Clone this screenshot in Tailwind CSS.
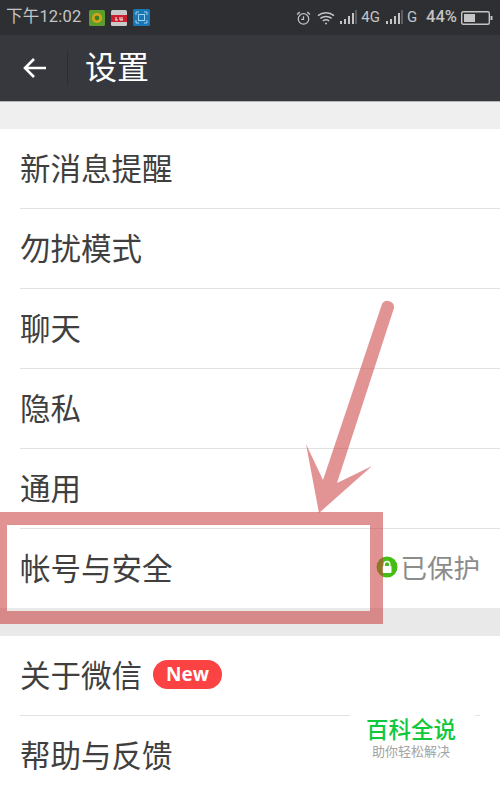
<!DOCTYPE html>
<html lang="zh-CN">
<head>
<meta charset="UTF-8">
<title>设置</title>
<script src="https://cdn.jsdelivr.net/npm/@tailwindcss/browser@4"></script>
</head>
<body class="m-0 bg-white font-['Noto_Sans_CJK_SC','Noto_Sans',sans-serif]">
<div class="relative w-[500px] h-[790px] overflow-hidden bg-white">

  <!-- status bar -->
  <div class="h-[35px] bg-[#2e2f33] flex items-center pl-[6px] pr-[7px] text-[#c4c4c4]">
    <span class="text-[16.5px] leading-none font-['Roboto','Noto_Sans_CJK_SC',sans-serif] tracking-[0.2px]">下午12:02</span>
    <svg class="ml-[7px]" width="16" height="16" viewBox="0 0 16 16"><rect width="16" height="16" rx="1.5" fill="#5c9e2e"/><circle cx="8" cy="8" r="5" fill="#d8a418"/><circle cx="8" cy="8" r="2.4" fill="#3f7d22"/></svg>
    <svg class="ml-[6px]" width="16" height="16" viewBox="0 0 16 16"><rect width="16" height="16" rx="1.5" fill="#c9c9c9"/><rect y="5" width="16" height="7" fill="#c8202c"/><path d="M4 10h3M5 7v3M9 7v3M11 7v3M9 10h3" stroke="#eee" stroke-width="1"/></svg>
    <svg class="ml-[6px]" width="17" height="17" viewBox="0 0 17 17" fill="none"><rect width="17" height="17" rx="1.5" fill="#1878b4"/><path d="M3 6V3h3M11 3h3v3M14 11v3h-3M6 14H3v-3" stroke="#9fd0ee" stroke-width="1"/><rect x="5.5" y="5.5" width="6" height="6" stroke="#9fd0ee" stroke-width="1"/></svg>

    <div class="ml-auto flex items-center">
      <svg width="15" height="16" viewBox="0 0 16 16" fill="none" stroke="#c4c4c4" stroke-width="1.3"><circle cx="8" cy="9" r="5.6"/><path d="M8 6v3.4H5.6"/><path d="M1.2 4.2 4 1.6M14.8 4.2 12 1.6" stroke-width="1.6"/></svg>
      <svg class="ml-[6px]" width="18" height="14" viewBox="0 0 18 14" fill="none" stroke="#c4c4c4" stroke-width="1.5"><path d="M1 4.6c4.6-3.8 11.4-3.8 16 0M3.4 7.4c3.2-2.6 8-2.6 11.2 0M5.8 10c1.8-1.3 4.6-1.3 6.4 0"/><circle cx="9" cy="12.4" r="1" fill="#c4c4c4" stroke="none"/></svg>
      <svg class="ml-[5px]" width="17" height="15" viewBox="0 0 17 15" fill="#c4c4c4"><rect x="0" y="11" width="2" height="3"/><rect x="4" y="9" width="2" height="5"/><rect x="8" y="6" width="2" height="8"/><rect x="12" y="3" width="2" height="11"/><rect x="15.5" y="0" width="1" height="14" fill="#8c8c8c"/></svg>
      <span class="ml-[4px] text-[15px] leading-none font-['Roboto',sans-serif]">4G</span>
      <svg class="ml-[6px]" width="17" height="15" viewBox="0 0 17 15" fill="#c4c4c4"><rect x="0" y="11" width="2" height="3"/><rect x="4" y="9" width="2" height="5"/><rect x="8" y="6" width="2" height="8"/><rect x="12" y="3" width="2" height="11"/><rect x="15.5" y="0" width="1" height="14" fill="#8c8c8c"/></svg>
      <span class="ml-[4px] text-[15px] leading-none font-['Roboto',sans-serif]">G</span>
      <span class="ml-[9px] text-[16.5px] leading-none font-medium font-['Roboto',sans-serif]">44%</span>
      <svg class="ml-[4px]" width="32" height="14" viewBox="0 0 32 14" fill="none"><rect x="0.7" y="0.7" width="27.6" height="12.6" rx="1.5" stroke="#c4c4c4" stroke-width="1.4"/><rect x="3" y="3" width="11" height="8" fill="#c4c4c4"/><rect x="29.5" y="5" width="2" height="4" fill="#c4c4c4"/></svg>
    </div>
  </div>

  <!-- title bar -->
  <div class="h-[67px] bg-[#37383d] border-b border-[#b5b5b5] flex items-center">
    <svg class="ml-[22px]" width="24" height="22" viewBox="0 0 24 22" fill="none" stroke="#fff" stroke-width="2.6"><path d="M24 11H3M12 2l-9 9 9 9"/></svg>
    <div class="ml-[21px] w-px h-[33px] bg-[#2b2c30]"></div>
    <span class="ml-[17px] pb-[6px] text-[32px] leading-none text-white">设置</span>
  </div>

  <div class="h-[27px] bg-[#efeff0]"></div>

  <!-- group 1 -->
  <div class="bg-white">
    <div class="ml-[20px] h-[80px] pb-[3px] border-b border-[#e2e2e2] flex items-center text-[30.5px] leading-none text-[#3f3f3f]">新消息提醒</div>
    <div class="ml-[20px] h-[80px] pb-[3px] border-b border-[#e2e2e2] flex items-center text-[30.5px] leading-none text-[#3f3f3f]">勿扰模式</div>
    <div class="ml-[20px] h-[80px] pb-[3px] border-b border-[#e2e2e2] flex items-center text-[30.5px] leading-none text-[#3f3f3f]">聊天</div>
    <div class="ml-[20px] h-[80px] pb-[3px] border-b border-[#e2e2e2] flex items-center text-[30.5px] leading-none text-[#3f3f3f]">隐私</div>
    <div class="ml-[20px] h-[80px] pb-[3px] border-b border-[#e2e2e2] flex items-center text-[30.5px] leading-none text-[#3f3f3f]">通用</div>
    <div class="pl-[20px] pr-[20px] h-[79px] pb-[3px] flex items-center text-[30.5px] leading-none text-[#3f3f3f]">
      <span>帐号与安全</span>
      <svg class="ml-auto" width="22" height="22" viewBox="0 0 22 22"><circle cx="11" cy="11" r="10.5" fill="#45bd14"/><rect x="6.5" y="10" width="9" height="7" rx="1" fill="#fff"/><path d="M8.2 10V8.2a2.8 2.8 0 0 1 5.6 0V10" fill="none" stroke="#fff" stroke-width="1.5"/></svg>
      <span class="ml-[3px] text-[26.5px] text-[#8c8c8c]">已保护</span>
    </div>
  </div>

  <div class="h-[28px] bg-[#e9e9ea]"></div>

  <!-- group 2 -->
  <div class="bg-white">
    <div class="mx-[20px] h-[80px] pb-[3px] border-b border-[#e2e2e2] flex items-center text-[30.5px] leading-none text-[#3f3f3f]">
      <span>关于微信</span>
      <span class="ml-[11px] w-[69px] h-[29px] rounded-full bg-[#fb4343] flex items-center justify-center text-[19px] font-bold text-white font-['Open_Sans',sans-serif]">New</span>
    </div>
    <div class="ml-[20px] h-[80px] pb-[3px] flex items-center text-[30.5px] leading-none text-[#3f3f3f]">帮助与反馈</div>
  </div>

  <!-- watermark -->
  <div class="absolute left-[350px] top-[715px] w-[125px] h-[75px] bg-white flex flex-col items-center pt-[1px] pr-[3px]">
    <span class="text-[22.5px] leading-[24px] font-medium text-[#10c83c]">百科全说</span>
    <span class="text-[13px] leading-[16px] text-[#a3a3a3] mt-[3px]">助你轻松解决</span>
  </div>

  <!-- red annotation -->
  <svg class="absolute left-0 top-0 pointer-events-none" width="500" height="790" viewBox="0 0 500 790" fill="none">
    <path d="M382 304 A6.5 6.5 0 0 1 394 308 L337 483 L372 466 L319 513 L306 444 L323 480 Z" fill="#cb3c3c" fill-opacity="0.55"/>
    <rect x="0.5" y="518.5" width="376" height="99" stroke="#c93a3a" stroke-opacity="0.55" stroke-width="13"/>
  </svg>
</div>
</body>
</html>
